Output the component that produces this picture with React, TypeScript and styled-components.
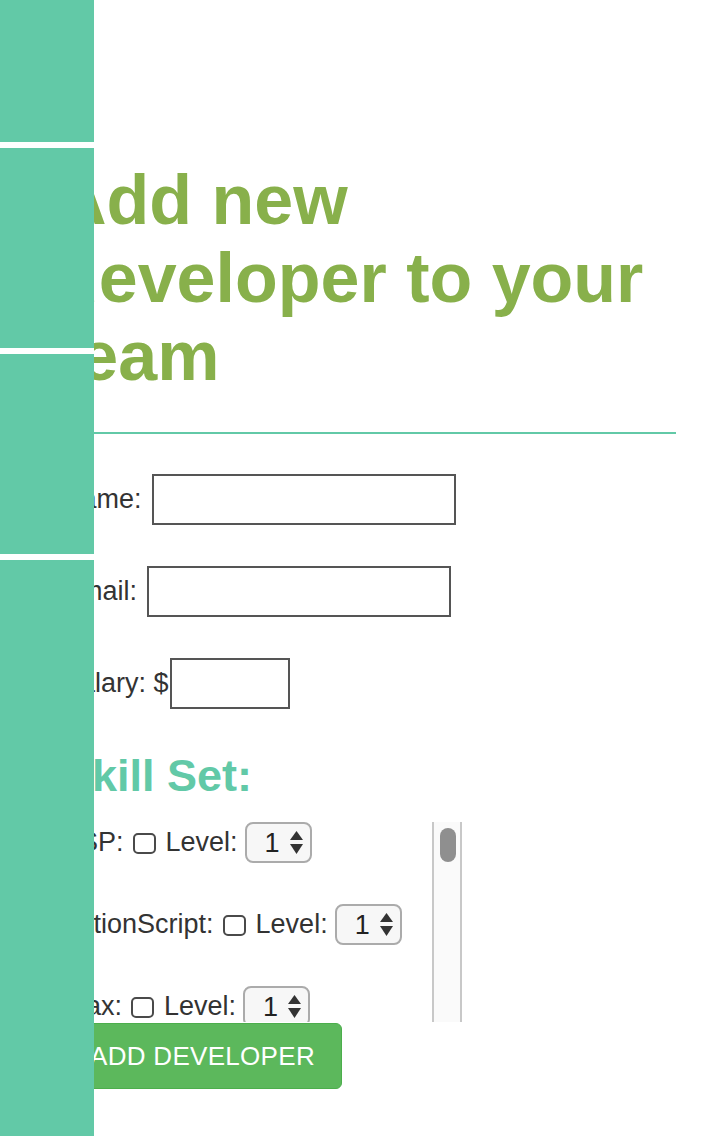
import React from "react";
import styled, { createGlobalStyle } from "styled-components";

const GlobalStyle = createGlobalStyle`
  html, body {
    margin: 0;
    padding: 0;
    background: #ffffff;
  }
  body {
    font-family: "Liberation Sans", Arial, Helvetica, sans-serif;
    color: #333333;
  }
  * { box-sizing: border-box; }
`;

const TEAL = "#62c9a7";
const OLIVE = "#88b04b";

const Sidebar = styled.nav`
  position: fixed;
  top: 0;
  left: 0;
  bottom: 0;
  width: 94px;
  display: flex;
  flex-direction: column;
  gap: 6px;
  background: #ffffff;
  z-index: 10;
`;

const SideBlock = styled.div<{ $h?: number }>`
  background: ${TEAL};
  flex: ${(p) => (p.$h ? `0 0 ${p.$h}px` : "1 1 auto")};
`;

const Main = styled.main`
  padding: 0 44px;
`;

const Title = styled.h1`
  margin: 161px 0 0;
  padding-left: 12px;
  font-size: 70px;
  line-height: 78px;
  font-weight: 700;
  color: ${OLIVE};
`;

const Rule = styled.hr`
  margin: 37px 0 0;
  border: 0;
  height: 2px;
  background: ${TEAL};
`;

const Form = styled.form`
  padding: 40px 0 0 18px;
`;

const FieldRow = styled.div`
  display: flex;
  align-items: center;
  margin-bottom: 41px;
  font-size: 27px;
  color: #333333;
`;

const Label = styled.label<{ $tight?: boolean }>`
  margin-right: ${(p) => (p.$tight ? "1px" : "10px")};
`;

const TextInput = styled.input<{ $w: number }>`
  width: ${(p) => p.$w}px;
  height: 51px;
  border: 2px solid #555555;
  border-radius: 0;
  background: #ffffff;
  font-size: 24px;
  padding: 0 8px;
  outline: none;
`;

const SkillTitle = styled.h2`
  margin: 2px 0 20px;
  font-size: 45px;
  line-height: 52px;
  font-weight: 700;
  color: ${TEAL};
`;

const SkillArea = styled.div`
  display: flex;
  width: 400px;
  height: 200px;
`;

const SkillList = styled.div`
  flex: 1 1 auto;
  overflow: hidden;
`;

const ScrollTrack = styled.div`
  flex: 0 0 30px;
  background: #fafafa;
  border-left: 2px solid #c8c8c8;
  border-right: 2px solid #c8c8c8;
  padding: 6px 4px 0 6px;
`;

const ScrollThumb = styled.div`
  width: 16px;
  height: 34px;
  border-radius: 8px;
  background: #8f8f8f;
`;

const SkillRow = styled.div`
  display: flex;
  align-items: center;
  height: 41px;
  margin-bottom: 41px;
  font-size: 27px;
  color: #333333;
  white-space: nowrap;

  &:last-child {
    margin-bottom: 0;
  }
`;

const Check = styled.input`
  appearance: none;
  -webkit-appearance: none;
  flex: 0 0 auto;
  width: 23px;
  height: 21px;
  margin: 1px 10px 0 9px;
  border: 2px solid #4a4a4a;
  border-radius: 5px;
  background: #ffffff;
`;

const LevelText = styled.span`
  margin-right: 7px;
`;

const SelectWrap = styled.span`
  position: relative;
  display: inline-flex;
`;

const LevelSelect = styled.select`
  appearance: none;
  -webkit-appearance: none;
  width: 67px;
  height: 41px;
  border: 2px solid #ababab;
  border-radius: 8px;
  background: #f7f7f7;
  font-family: "Liberation Sans", Arial, sans-serif;
  font-size: 27px;
  color: #222222;
  padding: 0 0 0 18px;
  outline: none;
`;

const Arrows = styled.svg`
  position: absolute;
  right: 9px;
  top: 9px;
  width: 13px;
  height: 23px;
  pointer-events: none;
`;

const AddButton = styled.button`
  display: block;
  height: 66px;
  margin-top: 1px;
  padding: 0 26px 0 27px;
  border: 1px solid #4cae4c;
  border-radius: 6px;
  background: #5cb85c;
  color: #ffffff;
  font-family: "Liberation Sans", Arial, sans-serif;
  font-size: 26px;
  letter-spacing: 0.3px;
  text-transform: uppercase;
`;

const skills = [
  "ASP",
  "ActionScript",
  "Ajax",
  "Angular",
  "C",
  "C#",
  "C++",
  "CSS",
  "HTML",
  "Java",
  "JavaScript",
];

function Level() {
  return (
    <SelectWrap>
      <LevelSelect defaultValue="1">
        {[1, 2, 3, 4, 5].map((n) => (
          <option key={n} value={n}>
            {n}
          </option>
        ))}
      </LevelSelect>
      <Arrows viewBox="0 0 13 23">
        <polygon points="6.5,0 13,9 0,9" fill="#333" />
        <polygon points="0,13 13,13 6.5,23" fill="#333" />
      </Arrows>
    </SelectWrap>
  );
}

export default function App() {
  return (
    <>
      <GlobalStyle />
      <Sidebar>
        <SideBlock $h={142} />
        <SideBlock $h={200} />
        <SideBlock $h={200} />
        <SideBlock />
      </Sidebar>
      <Main>
        <Title>Add new developer to your team</Title>
        <Rule />
        <Form onSubmit={(e) => e.preventDefault()}>
          <FieldRow>
            <Label>Name:</Label>
            <TextInput $w={304} type="text" />
          </FieldRow>
          <FieldRow>
            <Label>Email:</Label>
            <TextInput $w={304} type="email" />
          </FieldRow>
          <FieldRow>
            <Label $tight>Salary: $</Label>
            <TextInput $w={120} type="text" />
          </FieldRow>
          <SkillTitle>Skill Set:</SkillTitle>
          <SkillArea>
            <SkillList>
              {skills.map((s) => (
                <SkillRow key={s}>
                  <span>{s}:</span>
                  <Check type="checkbox" />
                  <LevelText>Level:</LevelText>
                  <Level />
                </SkillRow>
              ))}
            </SkillList>
            <ScrollTrack aria-hidden="true">
              <ScrollThumb />
            </ScrollTrack>
          </SkillArea>
          <AddButton type="submit">Add Developer</AddButton>
        </Form>
      </Main>
    </>
  );
}
